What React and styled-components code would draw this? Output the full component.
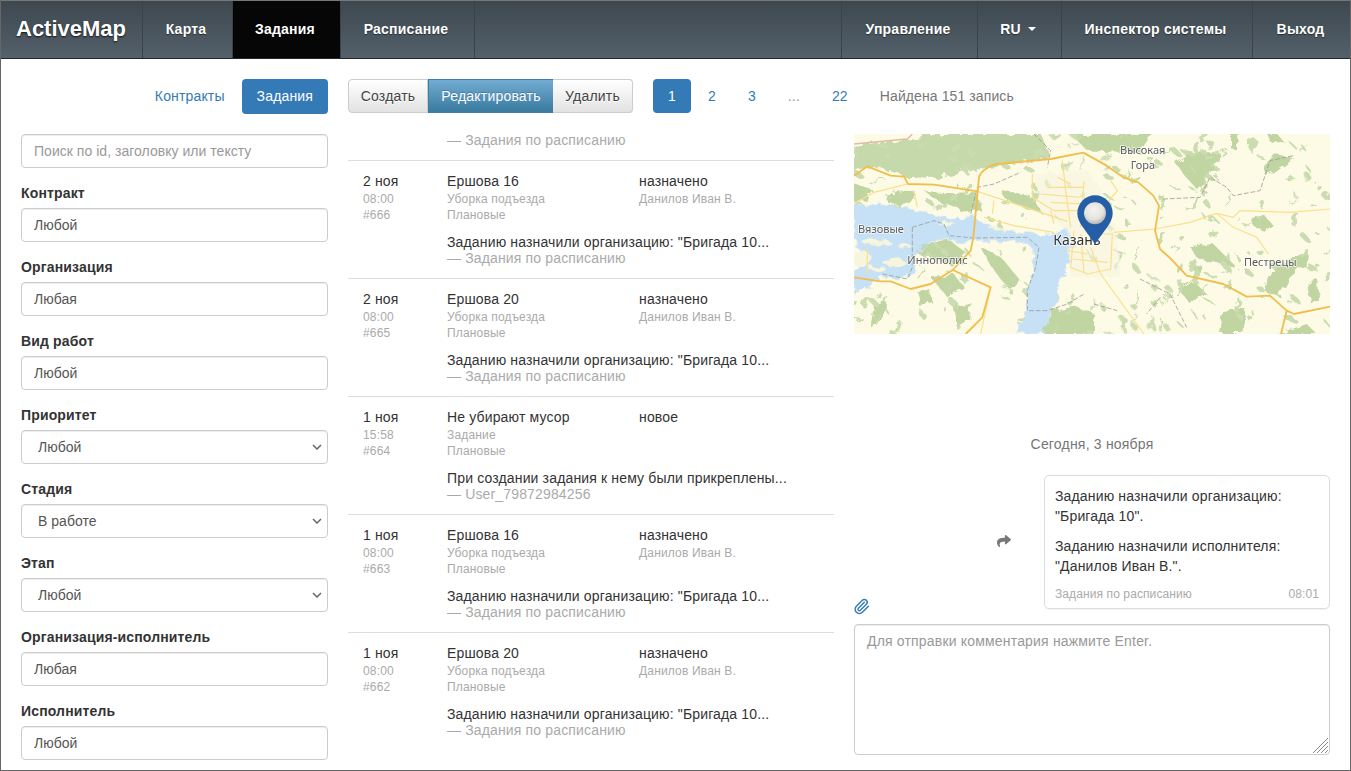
import styled, { createGlobalStyle } from "styled-components";
import { FaShare } from "react-icons/fa";
import { Paperclip } from "lucide-react";

const GlobalStyle = createGlobalStyle`
  * { box-sizing: border-box; }
  html, body { margin: 0; height: 100%; overflow: hidden; }
  body {
    font-family: "Liberation Sans", Arial, sans-serif;
    font-size: 14px;
    line-height: 20px;
    letter-spacing: 0.15px;
    color: #333;
    background: #fff;
  }
`;

const Page = styled.div`
  height: 100vh;
  display: flex;
  flex-direction: column;
  border: 1px solid #666;
  border-top: 0;
  overflow: hidden;
`;

const Navbar = styled.nav`
  flex: none;
  height: 59px;
  display: flex;
  margin: 0 -1px;
  background: linear-gradient(to bottom, #3d4850, #54606a);
  border-top: 1px solid #777;
  border-bottom: 1px solid #20262a;
`;

const Brand = styled.a`
  width: 142px;
  padding: 0 0 2px 16px;
  display: flex;
  align-items: center;
  font-size: 22px;
  font-weight: bold;
  letter-spacing: 0;
  color: #fff;
  text-shadow: 0 1px 2px rgba(0, 0, 0, 0.8);
`;

const NavItem = styled.a`
  display: flex;
  align-items: center;
  justify-content: center;
  width: ${(p) => p.$width}px;
  padding: 0 3px 2px 0;
  font-weight: bold;
  letter-spacing: 0.22px;
  color: #fff;
  border-left: 1px solid #38434a;
  background: ${(p) => (p.$active ? "#060606" : "transparent")};
  text-shadow: 0 1px 1px rgba(0, 0, 0, 0.5);
`;

const Caret = styled.span`
  display: inline-block;
  margin-left: 7px;
  border-top: 4px solid #fff;
  border-left: 4px solid transparent;
  border-right: 4px solid transparent;
`;

const NavSpacer = styled.div`
  flex: 1;
  border-left: 1px solid #38434a;
`;

const Content = styled.div`
  flex: 1;
  min-height: 0;
  padding: 20px 20px 0;
  display: grid;
  grid-template-columns: 307px 486px 476px;
  grid-template-rows: 35px 1fr;
  column-gap: 20px;
  row-gap: 20px;
`;

const Pills = styled.div`
  display: flex;
  justify-content: flex-end;
  gap: 2px;
`;

const Pill = styled.a`
  padding: 7px 15px;
  border-radius: 4px;
  color: ${(p) => (p.$active ? "#fff" : "#337ab7")};
  background: ${(p) => (p.$active ? "#337ab7" : "transparent")};
`;

const Toolbar = styled.div`
  grid-column: 2 / 4;
  display: flex;
  align-items: flex-start;
`;

const ButtonGroup = styled.div`
  display: flex;
  margin-right: 20px;
`;

const GroupButton = styled.button`
  width: ${(p) => p.$width}px;
  height: 34px;
  padding: 6px 0;
  font: inherit;
  letter-spacing: 0.2px;
  color: ${(p) => (p.$active ? "#fff" : "#444")};
  border: 1px solid ${(p) => (p.$active ? "#3d7ea6" : "#ccc")};
  border-left-width: ${(p) => (p.$first || p.$active ? "1px" : "0")};
  border-right-width: ${(p) => (p.$active ? "0" : "1px")};
  border-radius: ${(p) => (p.$first ? "4px 0 0 4px" : p.$last ? "0 4px 4px 0" : "0")};
  background: ${(p) =>
    p.$active
      ? "linear-gradient(to bottom, #72acd3, #397a9f)"
      : "linear-gradient(to bottom, #fff, #e2e2e2)"};
  text-shadow: ${(p) => (p.$active ? "0 -1px 0 rgba(0,0,0,.2)" : "0 1px 0 #fff")};
`;

const Pagination = styled.div`
  display: flex;
  gap: 2px;
`;

const PageLink = styled.a`
  padding: 7px 15px;
  border-radius: 4px;
  color: ${(p) => (p.$active ? "#fff" : p.$muted ? "#999" : "#337ab7")};
  background: ${(p) => (p.$active ? "#337ab7" : "transparent")};
`;

const Found = styled.span`
  margin-left: 17px;
  padding: 7px 0;
  letter-spacing: 0.1px;
  color: #777;
`;

const Filters = styled.div`
  min-height: 0;
  overflow: hidden;
`;

const Field = styled.div`
  margin-bottom: 15px;
`;

const Label = styled.label`
  display: block;
  margin-bottom: 5px;
  font-weight: bold;
`;

const controlStyles = `
  display: block;
  width: 100%;
  height: 34px;
  padding: 6px 12px;
  font: inherit;
  letter-spacing: 0.03px;
  color: #555;
  background: #fff;
  border: 1px solid #ccc;
  border-radius: 4px;
  box-shadow: inset 0 1px 1px rgba(0, 0, 0, 0.075);
  outline: none;
  &::placeholder { color: #999; opacity: 1; }
`;

const Input = styled.input`${controlStyles}`;

const chevron =
  "data:image/svg+xml," +
  encodeURIComponent(
    '<svg xmlns="http://www.w3.org/2000/svg" width="10" height="6"><path d="M1 1l4 4 4-4" fill="none" stroke="#666" stroke-width="1.5"/></svg>'
  );

const Select = styled.select`
  ${controlStyles}
  padding-left: 16px;
  appearance: none;
  background: #fff url("${chevron}") no-repeat right 5px center;
`;

const List = styled.div`
  min-height: 0;
`;

const ListTail = styled.div`
  height: 28px;
  margin-top: -2px;
  padding-left: 99px;
  line-height: 16px;
  color: #aaa;
`;

const Row = styled.div`
  height: 118px;
  padding: 10px 0 0 15px;
  display: grid;
  grid-template-columns: 84px 192px 1fr;
  grid-template-rows: 20px 16px 16px auto;
  border-top: 1px solid #ddd;
`;

const Cell = styled.div`
  color: #333;
`;

const Meta = styled.div`
  font-size: 12px;
  line-height: 16px;
  letter-spacing: 0.17px;
  color: #aaa;
`;

const Message = styled.div`
  grid-column: 2 / 4;
  padding-top: 10px;
  line-height: 18px;
  color: #333;
`;

const Author = styled.div`
  margin-top: -1px;
  line-height: 16px;
  color: #aaa;
`;

const Side = styled.div`
  min-height: 0;
  display: flex;
  flex-direction: column;
`;

const MapBox = styled.div`
  height: 200px;
  flex: none;
  overflow: hidden;
  background: #fdfbe6;
  svg { display: block; }
`;

const DateLine = styled.div`
  margin-top: 100px;
  text-align: center;
  letter-spacing: 0.2px;
  color: #777;
`;

const MessageRow = styled.div`
  margin-top: 21px;
  display: flex;
  align-items: center;
`;

const Attach = styled.a`
  align-self: flex-end;
  margin: 0 0 -6px -1px;
  color: #337ab7;
  line-height: 0;
`;

const Forward = styled.span`
  margin: -2px 33px 0 auto;
  color: #777;
  line-height: 0;
`;

const Bubble = styled.div`
  width: 286px;
  padding: 10px 10px 6px;
  border: 1px solid #ddd;
  border-radius: 5px;
  box-shadow: 0 1px 1px rgba(0, 0, 0, 0.05);
  p { margin: 0 0 10px; }
`;

const BubbleFooter = styled.div`
  display: flex;
  justify-content: space-between;
  font-size: 12px;
  line-height: 16px;
  letter-spacing: 0.1px;
  color: #aaa;
`;

const CommentBox = styled.div`
  position: relative;
  margin-top: 15px;
`;

const Comment = styled.textarea`
  ${controlStyles}
  height: 131px;
  letter-spacing: 0.18px;
  resize: none;
`;

const Grip = styled.svg`
  position: absolute;
  right: 2px;
  bottom: 2px;
`;

const MapLabel = styled.text`
  font-family: "Noto Sans", "DejaVu Sans", sans-serif;
  font-size: ${(p) => (p.$big ? "42px" : "33px")};
  letter-spacing: 0;
  fill: ${(p) => (p.$big ? "#333" : "#5c5c5c")};
  stroke: rgba(255, 255, 255, 0.75);
  stroke-width: 5px;
  paint-order: stroke;
`;

const blobs = [
  "0,35 160,15 210,0 390,0 370,60 340,110 230,135 150,125 60,95 0,115",
  "380,0 560,0 590,70 470,90 400,95 340,115",
  "215,175 370,180 385,232 340,235 260,205",
  "440,165 540,190 560,235 490,215 450,190",
  "0,150 60,170 30,200 0,205",
  "90,175 180,170 170,210 100,205",
  "380,340 440,370 500,440 470,470 420,410",
  "190,330 290,320 340,360 300,400 230,370 190,360",
  "230,430 300,420 330,460 280,490",
  "560,600 600,530 650,515 720,540 720,600",
  "650,0 740,0 770,50 700,50",
  "963,85 1008,55 1098,55 1068,130 1028,165 988,120",
  "1228,100 1258,60 1318,70 1278,100 1238,130",
  "1008,340 1078,330 1118,370 1148,400 1058,380 1028,370",
  "1188,250 1228,240 1253,270 1228,290 1198,275",
  "1238,420 1298,380 1358,345 1368,380 1308,430 1278,490 1233,470",
  "1108,530 1178,525 1168,600 1098,600",
  "978,470 1018,440 1058,480 1008,510",
  "1008,390 1048,400 1028,425",
  "730,0 898,0 858,60 768,50",
  "1128,0 1158,0 1148,50 1128,40",
  "1268,600 1358,570 1388,600",
  "1363,450 1388,430 1398,490 1368,510",
  "1240,0 1270,0 1290,25 1250,25",
  "60,510 100,500 85,560 50,580",
  "300,520 350,505 345,560 305,585",
  "190,480 225,465 235,505 195,515",
];

const scatter = Array.from({ length: 260 }, (_, i) => ({
  x: (i * 397 + i * i * 13) % 1428,
  y: (i * 211 + i * i * 7 + 37) % 600,
  rx: 6 + (i * 7) % 17,
  ry: 3 + (i * 5) % 10,
  r: (i * 53) % 180,
}));

const islands = [
  [70, 325, 45, 10], [120, 385, 35, 12], [25, 375, 30, 22], [280, 272, 26, 6],
  [150, 335, 18, 8], [70, 405, 26, 8], [430, 285, 26, 4],
];

const mainRoads = [
  "M0 125 L40 97 L110 125 L150 128 L162 150 L240 152 L370 172",
  "M296 408 L350 350 L358 310 L375 130 C380 110 410 92 430 90 L590 75 L688 56 L758 95 L808 130 L853 145 L898 185 L915 215 L903 290 L918 345 L948 372 L998 425 L1108 450 L1178 488 L1248 485 L1298 530 L1320 540 L1428 518",
  "M0 430 L80 442 L110 442 L170 465 L230 450 L296 408 L410 460 L385 550 L335 600",
  "M1298 530 L1281 600",
];

const minorRoads = [
  "M0 210 L60 175 L160 150",
  "M370 172 L560 235 L640 262",
  "M778 295 L903 285 L1008 265 L1088 238 L1138 250 L1158 230 L1308 235 L1428 225",
  "M1088 238 L1138 280 L1208 310 L1243 360",
  "M390 250 L480 275 L600 295",
  "M535 120 L535 190 L600 230 L690 230 M625 80 L635 170 L650 280",
  "M580 160 L690 160 M590 230 L600 270 M690 140 L680 280",
  "M560 180 L680 190 M590 205 L690 210 M610 130 L650 150",
  "M660 290 L650 400 L700 420 L770 405 L775 300 L700 300",
  "M710 340 L740 420 L870 600 M770 140 L790 170 L730 240",
  "M640 350 L700 360 M680 300 L690 415 M655 375 L760 385",
  "M40 340 L40 420 M410 460 L380 600",
  "M180 170 L190 220 M420 200 L415 240",
];

const borders = [
  "M175 280 L240 260 L270 270 L285 305 L360 312 L520 310 L555 340 L545 400 L520 470 L520 530 L580 530 L640 510 L690 480",
  "M175 280 L175 400 L160 435 L85 420",
  "M858 435 L948 480 L998 580",
  "M928 195 L1038 190 L1068 130 L1118 160 L1138 185 L1218 170 L1248 80 L1318 65",
  "M918 490 L878 540",
  "M720 510 L790 530 M350 240 L370 160 L420 150 L500 115",
  "M540 0 L590 50 L580 100",
];

const MapDrawing = () => (
  <svg width="476" height="200" viewBox="0 0 1428 600">
    <defs>
      <radialGradient id="pinGlass" cx="45%" cy="35%" r="70%">
        <stop offset="0%" stopColor="#f4f4f2" />
        <stop offset="60%" stopColor="#e4e3de" />
        <stop offset="100%" stopColor="#a8a8a4" />
      </radialGradient>
      <filter id="rough" x="0" y="0" width="100%" height="100%" colorInterpolationFilters="sRGB">
        <feTurbulence type="fractalNoise" baseFrequency="0.035" numOctaves="3" seed="4" result="n" />
        <feDisplacementMap in="SourceGraphic" in2="n" scale="30" />
        <feGaussianBlur stdDeviation="1.2" />
      </filter>
      <filter id="soft" x="0" y="0" width="100%" height="100%">
        <feGaussianBlur stdDeviation="1" />
      </filter>
    </defs>
    <g filter="url(#rough)">
      {blobs.map((points, i) => (
        <polygon key={i} points={points} fill={i < 2 ? "#c6d9aa" : "#c0d5a2"} />
      ))}
      {scatter.map((b, i) => (
        <ellipse
          key={i}
          cx={b.x}
          cy={b.y}
          rx={b.rx}
          ry={b.ry}
          transform={`rotate(${b.r} ${b.x} ${b.y})`}
          fill="#cadcb0"
        />
      ))}
      <path
        fill="#c6e0f5"
        d="M0 215 C100 205 180 225 260 250 C300 262 340 240 365 250 C380 275 450 290 540 300 C580 310 600 295 640 280 L660 330 C640 390 625 440 610 500 C595 540 580 560 570 600 L490 600 C510 560 520 500 525 440 C545 380 550 350 520 330 C460 315 380 315 330 325 L290 320 C225 310 195 330 190 380 C185 425 160 445 100 430 C80 420 60 435 50 455 L0 475 L0 405 C50 390 30 350 0 335 Z"
      />
      {islands.map(([cx, cy, rx, ry]) => (
        <ellipse key={`${cx}-${cy}`} cx={cx} cy={cy} rx={rx} ry={ry} fill="#f6f6de" />
      ))}
      <polygon points="540,120 700,110 760,200 790,300 800,430 650,430 640,290 560,230" fill="#f6f2dc" opacity="0.55" />
    </g>
    <g filter="url(#soft)">
      <polyline points="0,30 160,15 175,0" fill="none" stroke="#e3b9a6" strokeWidth="4" />
      {minorRoads.map((d) => (
        <path key={d} d={d} fill="none" stroke="#fbdf8b" strokeWidth="3.5" />
      ))}
      {borders.map((d) => (
        <path key={d} d={d} fill="none" stroke="#9b9d97" strokeWidth="2.5" strokeDasharray="14 6" />
      ))}
      {mainRoads.map((d) => (
        <path key={d} d={d} fill="none" stroke="#f1be4c" strokeWidth="5.5" strokeLinejoin="round" />
      ))}
    </g>
    <MapLabel x="12" y="298">Вязовые</MapLabel>
    <MapLabel x="160" y="390">Иннополис</MapLabel>
    <MapLabel x="798" y="60">Высокая</MapLabel>
    <MapLabel x="830" y="106">Гора</MapLabel>
    <MapLabel x="1170" y="395">Пестрецы</MapLabel>
    <MapLabel x="598" y="334" $big>Казань</MapLabel>
    <path
      fill="#235ea6"
      d="M723 184 C694 184 670 208 670 238 C670 252 676 264 684 276 L723 330 L762 276 C770 264 776 252 776 238 C776 208 752 184 723 184 Z"
    />
    <circle cx="723" cy="238" r="33" fill="url(#pinGlass)" />
  </svg>
);

const tasks = [
  { day: "2 ноя", time: "08:00", id: "#666", title: "Ершова 16", kind: "Уборка подъезда", plan: "Плановые", status: "назначено", who: "Данилов Иван В.", text: 'Заданию назначили организацию: "Бригада 10...', author: "— Задания по расписанию" },
  { day: "2 ноя", time: "08:00", id: "#665", title: "Ершова 20", kind: "Уборка подъезда", plan: "Плановые", status: "назначено", who: "Данилов Иван В.", text: 'Заданию назначили организацию: "Бригада 10...', author: "— Задания по расписанию" },
  { day: "1 ноя", time: "15:58", id: "#664", title: "Не убирают мусор", kind: "Задание", plan: "Плановые", status: "новое", who: "", text: "При создании задания к нему были прикреплены...", author: "— User_79872984256" },
  { day: "1 ноя", time: "08:00", id: "#663", title: "Ершова 16", kind: "Уборка подъезда", plan: "Плановые", status: "назначено", who: "Данилов Иван В.", text: 'Заданию назначили организацию: "Бригада 10...', author: "— Задания по расписанию" },
  { day: "1 ноя", time: "08:00", id: "#662", title: "Ершова 20", kind: "Уборка подъезда", plan: "Плановые", status: "назначено", who: "Данилов Иван В.", text: 'Заданию назначили организацию: "Бригада 10...', author: "— Задания по расписанию" },
];

const filters = [
  { label: "Контракт", value: "Любой" },
  { label: "Организация", value: "Любая" },
  { label: "Вид работ", value: "Любой" },
  { label: "Приоритет", value: "Любой", select: true },
  { label: "Стадия", value: "В работе", select: true },
  { label: "Этап", value: "Любой", select: true },
  { label: "Организация-исполнитель", value: "Любая" },
  { label: "Исполнитель", value: "Любой" },
];

const App = () => (
  <Page>
    <GlobalStyle />
    <Navbar>
      <Brand>ActiveMap</Brand>
      <NavItem $width={90}>Карта</NavItem>
      <NavItem $width={108} $active>Задания</NavItem>
      <NavItem $width={134}>Расписание</NavItem>
      <NavSpacer />
      <NavItem $width={136}>Управление</NavItem>
      <NavItem $width={84}>RU<Caret /></NavItem>
      <NavItem $width={191}>Инспектор системы</NavItem>
      <NavItem $width={99}>Выход</NavItem>
    </Navbar>
    <Content>
      <Pills>
        <Pill>Контракты</Pill>
        <Pill $active>Задания</Pill>
      </Pills>
      <Toolbar>
        <ButtonGroup>
          <GroupButton $first $width={80}>Создать</GroupButton>
          <GroupButton $active $width={125}>Редактировать</GroupButton>
          <GroupButton $last $width={80}>Удалить</GroupButton>
        </ButtonGroup>
        <Pagination>
          <PageLink $active>1</PageLink>
          <PageLink>2</PageLink>
          <PageLink>3</PageLink>
          <PageLink $muted>...</PageLink>
          <PageLink>22</PageLink>
        </Pagination>
        <Found>Найдена 151 запись</Found>
      </Toolbar>
      <Filters>
        <Field>
          <Input placeholder="Поиск по id, заголовку или тексту" />
        </Field>
        {filters.map((f) => (
          <Field key={f.label}>
            <Label>{f.label}</Label>
            {f.select ? (
              <Select defaultValue={f.value}>
                <option>{f.value}</option>
              </Select>
            ) : (
              <Input defaultValue={f.value} />
            )}
          </Field>
        ))}
      </Filters>
      <List>
        <ListTail>— Задания по расписанию</ListTail>
        {tasks.map((t) => (
          <Row key={t.id}>
            <Cell>{t.day}</Cell>
            <Cell>{t.title}</Cell>
            <Cell>{t.status}</Cell>
            <Meta>{t.time}</Meta>
            <Meta>{t.kind}</Meta>
            <Meta>{t.who}</Meta>
            <Meta>{t.id}</Meta>
            <Meta>{t.plan}</Meta>
            <Meta />
            <Meta />
            <Message>
              {t.text}
              <Author>{t.author}</Author>
            </Message>
          </Row>
        ))}
      </List>
      <Side>
        <MapBox>
          <MapDrawing />
        </MapBox>
        <DateLine>Сегодня, 3 ноября</DateLine>
        <MessageRow>
          <Attach><Paperclip size={17} /></Attach>
          <Forward><FaShare size={14} /></Forward>
          <Bubble>
            <p>Заданию назначили организацию: "Бригада 10".</p>
            <p>Заданию назначили исполнителя: "Данилов Иван В.".</p>
            <BubbleFooter>
              <span>Задания по расписанию</span>
              <span>08:01</span>
            </BubbleFooter>
          </Bubble>
        </MessageRow>
        <CommentBox>
          <Comment placeholder="Для отправки комментария нажмите Enter." />
          <Grip width="15" height="15" viewBox="0 0 15 15">
            <path d="M15 0L0 15M15 4L4 15M15 8L8 15M15 12L12 15" stroke="#888" strokeWidth="1" fill="none" />
          </Grip>
        </CommentBox>
      </Side>
    </Content>
  </Page>
);

export default App;
